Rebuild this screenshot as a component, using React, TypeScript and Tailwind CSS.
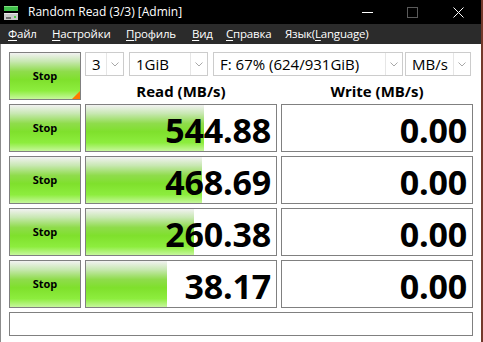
import React from 'react';

const green =
  'bg-[linear-gradient(to_bottom,#f2f2f2_0%,#c9e8b4_18%,#8fdc4c_40%,#7fe02c_58%,#8ded3e_82%,#c6f79c_100%)]';

const rows = [
  { read: '544.88', fill: 118 },
  { read: '468.69', fill: 116 },
  { read: '260.38', fill: 108 },
  { read: '38.17', fill: 81 },
];

function Chevron() {
  return (
    <svg width="8" height="5" viewBox="0 0 8 5">
      <path d="M0.5 0.5 L4 4 L7.5 0.5" fill="none" stroke="#a8a8a8" strokeWidth="1" />
    </svg>
  );
}

function Combo({ text, w }: { text: string; w: string }) {
  return (
    <div className={`${w} h-[24px] border border-[#cccccc] bg-white flex items-stretch`}>
      <div className="flex-1 flex items-center pl-[6px] text-[15px] text-black leading-none whitespace-nowrap overflow-hidden">
        {text}
      </div>
      <div className="w-[17px] border-l border-[#e6e6e6] flex items-center justify-center">
        <Chevron />
      </div>
    </div>
  );
}

function StopButton({ marked }: { marked?: boolean }) {
  return (
    <div
      className={`relative w-[72px] h-[48px] border border-[#808080] ${green} flex items-center justify-center text-[11px] font-bold text-black`}
    >
      Stop
      {marked && (
        <div className="absolute right-0 bottom-0 w-[8px] h-[8px] bg-[#ff7a00] [clip-path:polygon(100%_0,100%_100%,0_100%)]" />
      )}
    </div>
  );
}

function ValueBox({ value, fill }: { value: string; fill?: number }) {
  return (
    <div className="relative w-[192px] h-[48px] border border-[#808080] bg-white flex items-center justify-end pr-[5px] pt-[3px]">
      {fill !== undefined && (
        <div className={`absolute left-0 top-0 bottom-0 ${green}`} style={{ width: fill }} />
      )}
      <span className="relative text-[34px] font-bold text-black leading-none tracking-[-0.2px]">{value}</span>
    </div>
  );
}

function MenuItem({ acc, rest, pre, w }: { acc: string; rest: string; pre?: string; w: string }) {
  return (
    <span className={`${w} whitespace-nowrap`}>
      {pre}
      <span className="underline underline-offset-[2px]">{acc}</span>
      {rest}
    </span>
  );
}

export default function App() {
  return (
    <div className="w-[483px] h-[342px] bg-white flex flex-col overflow-hidden border-r-2 border-[#74392b] font-['Open_Sans',sans-serif]">
      {/* title bar */}
      <div className="h-[24px] bg-black flex items-center shrink-0">
        <svg className="ml-[4px]" width="15" height="16" viewBox="0 0 15 16">
          <rect x="0" y="2" width="14" height="5" fill="#3fbf4a" />
          <rect x="0" y="2" width="14" height="1" fill="#7ee07f" />
          <rect x="0" y="9" width="14" height="8" fill="#c9c9c9" />
          <rect x="0" y="9" width="14" height="1" fill="#e8e8e8" />
          <rect x="2" y="13" width="5" height="2" fill="#6d6d6d" />
          <rect x="10" y="12" width="2" height="2" fill="#4fcf4a" />
        </svg>
        <span className="ml-[9px] text-[12px] text-white leading-none">Random Read (3/3) [Admin]</span>
        <div className="flex-1" />
        <svg width="11" height="10" viewBox="0 0 11 10" className="mr-[34px]">
          <path d="M0 5.5 H11" stroke="#ffffff" strokeWidth="1" />
        </svg>
        <svg width="11" height="11" viewBox="0 0 11 11" className="mr-[35px]">
          <rect x="0.5" y="0.5" width="10" height="10" fill="none" stroke="#5a5a5a" strokeWidth="1" />
        </svg>
        <svg width="11" height="11" viewBox="0 0 11 11" className="mr-[17px]">
          <path d="M0.5 0.5 L10.5 10.5 M10.5 0.5 L0.5 10.5" stroke="#ffffff" strokeWidth="1" />
        </svg>
      </div>

      {/* menu bar */}
      <div className="h-[20px] bg-[#2b2b2b] flex items-center pl-[8px] text-[11.5px] tracking-[-0.2px] text-white leading-none shrink-0">
        <MenuItem w="w-[44px]" acc="Ф" rest="айл" />
        <MenuItem w="w-[74px]" acc="Н" rest="астройки" />
        <MenuItem w="w-[66px]" acc="П" rest="рофиль" />
        <MenuItem w="w-[34px]" acc="В" rest="ид" />
        <MenuItem w="w-[59px]" acc="С" rest="правка" />
        <MenuItem w="w-[100px]" pre="Язык(" acc="L" rest="anguage)" />
      </div>

      {/* content */}
      <div className="flex-1 border-l border-[#8c8c8c] pl-[8px] pt-[8px] flex flex-col gap-[4px]">
        <div className="flex gap-[4px]">
          <StopButton marked />
          <div className="w-[388px] flex flex-col">
            <div className="flex">
              <Combo text="3" w="w-[39px]" />
              <div className="w-[5px]" />
              <Combo text="1GiB" w="w-[79px]" />
              <div className="w-[5px]" />
              <Combo text="F: 67% (624/931GiB)" w="w-[190px]" />
              <div className="w-[2px]" />
              <Combo text="MB/s" w="w-[66px]" />
            </div>
            <div className="h-[24px] grid grid-cols-2 gap-[4px] items-end text-[15px] font-bold text-black leading-none">
              <div className="text-center pb-[1px]">Read (MB/s)</div>
              <div className="text-center pb-[1px]">Write (MB/s)</div>
            </div>
          </div>
        </div>

        {rows.map((r, i) => (
          <div key={i} className="flex gap-[4px]">
            <StopButton />
            <ValueBox value={r.read} fill={r.fill} />
            <ValueBox value="0.00" />
          </div>
        ))}

        <div className="w-[464px] h-[24px] border border-[#808080] bg-white" />
      </div>
    </div>
  );
}
